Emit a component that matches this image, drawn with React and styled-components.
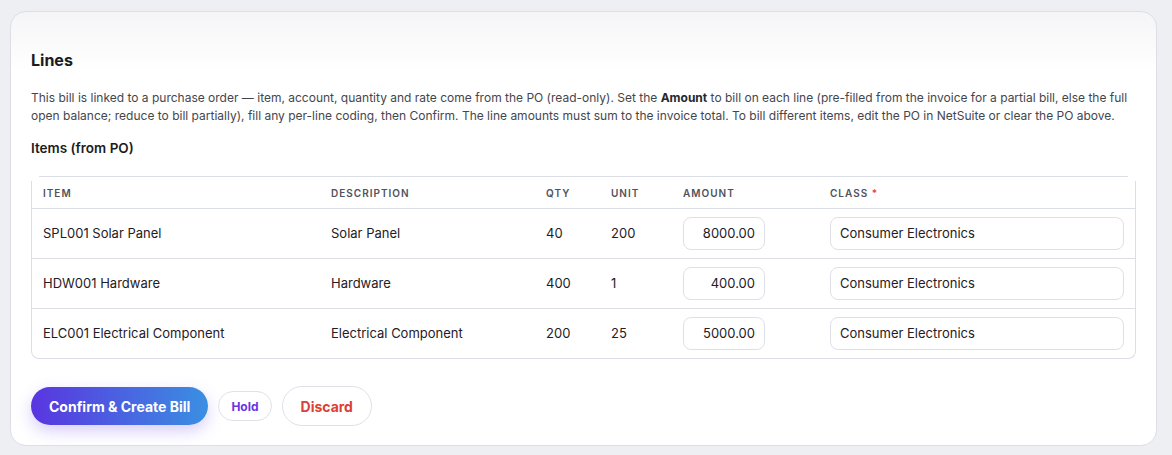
import React from 'react';
import styled, {createGlobalStyle} from 'styled-components';

const Global = createGlobalStyle`
	html, body {
		margin: 0;
		padding: 0;
		background: #eeeff2;
		font-family: Inter, "Noto Sans", sans-serif;
		color: #1c1d22;
	}
	* { box-sizing: border-box; }
`;

const Page = styled.div`
	padding: 11px 15px 9px 10px;
`;

const Card = styled.section`
	background: linear-gradient(180deg, #f5f5f7 0px, #ffffff 60px);
	border: 1px solid #dedfe6;
	border-radius: 16px;
	padding: 38px 20px 19px 20px;
	height: 435px;
`;

const Title = styled.h2`
	margin: 0 0 19px;
	font-size: 16px;
	line-height: 20px;
	font-weight: 700;
	color: #1b1c21;
`;

const Intro = styled.p`
	margin: 0 0 14px;
	font-size: 12px;
	line-height: 18px;
	color: #44464d;
	b { color: #26272c; font-weight: 700; }
`;

const SubTitle = styled.h3`
	margin: 0 0 24px;
	font-size: 13.5px;
	line-height: 18px;
	font-weight: 600;
	color: #1b1c21;
`;

const TableWrap = styled.div`
	position: relative;
	margin-top: 5px;
	border: 1px solid #dcdee6;
	border-top: none;
	border-radius: 0 0 8px 8px;
	&::before {
		content: '';
		position: absolute;
		top: -5px;
		left: 7px;
		right: 7px;
		height: 1px;
		background: #dcdee6;
	}
`;

const Table = styled.table`
	width: 100%;
	border-collapse: collapse;
	table-layout: fixed;
`;

const Th = styled.th`
	text-align: left;
	padding: 6px 11px 0;
	height: 27px;
	font-size: 10px;
	font-weight: 600;
	letter-spacing: 1px;
	text-transform: uppercase;
	color: #50535c;
	border-bottom: 1px solid #dcdee6;
	vertical-align: top;
`;

const Req = styled.span`
	color: #e0453f;
`;

const Td = styled.td`
	padding: 0 11px;
	height: 50px;
	font-size: 13px;
	color: #1f2025;
	border-bottom: ${p => (p.last ? 'none' : '1px solid #dcdee6')};
`;

const Input = styled.input`
	width: ${p => p.w || '100%'};
	height: 33px;
	border: 1px solid #dfe0e7;
	border-radius: 8px;
	padding: 0 9px;
	font: inherit;
	font-size: 13px;
	color: #1f2025;
	text-align: ${p => (p.right ? 'right' : 'left')};
	background: #fff;
	outline: none;
`;

const Actions = styled.div`
	display: flex;
	align-items: center;
	gap: 10px;
	margin-top: 27px;
`;

const Primary = styled.button`
	height: 38px;
	padding: 0 18px;
	border: none;
	border-radius: 19px;
	background: linear-gradient(90deg, #5a35e0 0%, #3a8fe2 100%);
	color: #fff;
	font: inherit;
	font-size: 14px;
	font-weight: 700;
	box-shadow: 0 6px 16px rgba(110, 80, 230, 0.28);
`;

const Ghost = styled.button`
	height: ${p => (p.small ? '30px' : '40px')};
	padding: 0 ${p => (p.small ? '12px' : '18px')};
	border: 1px solid #e0e1e9;
	border-radius: 20px;
	background: #fff;
	color: ${p => p.tone};
	font: inherit;
	font-size: ${p => (p.small ? '12px' : '14px')};
	font-weight: 700;
`;

const rows = [
	{item: 'SPL001 Solar Panel', desc: 'Solar Panel', qty: 40, unit: 200, amount: '8000.00'},
	{item: 'HDW001 Hardware', desc: 'Hardware', qty: 400, unit: 1, amount: '400.00'},
	{item: 'ELC001 Electrical Component', desc: 'Electrical Component', qty: 200, unit: 25, amount: '5000.00'}
];

const App = () => (
	<Page>
		<Global />
		<Card>
			<Title>Lines</Title>
			<Intro>
				This bill is linked to a purchase order — item, account, quantity and rate come from the PO (read-only). Set the <b>Amount</b> to bill on each line (pre-filled from the invoice for a partial bill, else the full open balance; reduce to bill partially), fill any per-line coding, then Confirm. The line amounts must sum to the invoice total. To bill different items, edit the PO in NetSuite or clear the PO above.
			</Intro>
			<SubTitle>Items (from PO)</SubTitle>
			<TableWrap>
				<Table>
					<colgroup>
						<col style={{width: 288}} />
						<col style={{width: 215}} />
						<col style={{width: 65}} />
						<col style={{width: 72}} />
						<col style={{width: 147}} />
						<col />
					</colgroup>
					<thead>
						<tr>
							<Th>Item</Th>
							<Th>Description</Th>
							<Th>Qty</Th>
							<Th>Unit</Th>
							<Th>Amount</Th>
							<Th>Class <Req>*</Req></Th>
						</tr>
					</thead>
					<tbody>
						{rows.map((r, i) => {
							const last = i === rows.length - 1;
							return (
								<tr key={r.item}>
									<Td last={last}>{r.item}</Td>
									<Td last={last}>{r.desc}</Td>
									<Td last={last}>{r.qty}</Td>
									<Td last={last}>{r.unit}</Td>
									<Td last={last}><Input right w="82px" defaultValue={r.amount} /></Td>
									<Td last={last}><Input defaultValue="Consumer Electronics" /></Td>
								</tr>
							);
						})}
					</tbody>
				</Table>
			</TableWrap>
			<Actions>
				<Primary>Confirm &amp; Create Bill</Primary>
				<Ghost small tone="#6a35e2">Hold</Ghost>
				<Ghost tone="#dc3f3a">Discard</Ghost>
			</Actions>
		</Card>
	</Page>
);

export default App;
